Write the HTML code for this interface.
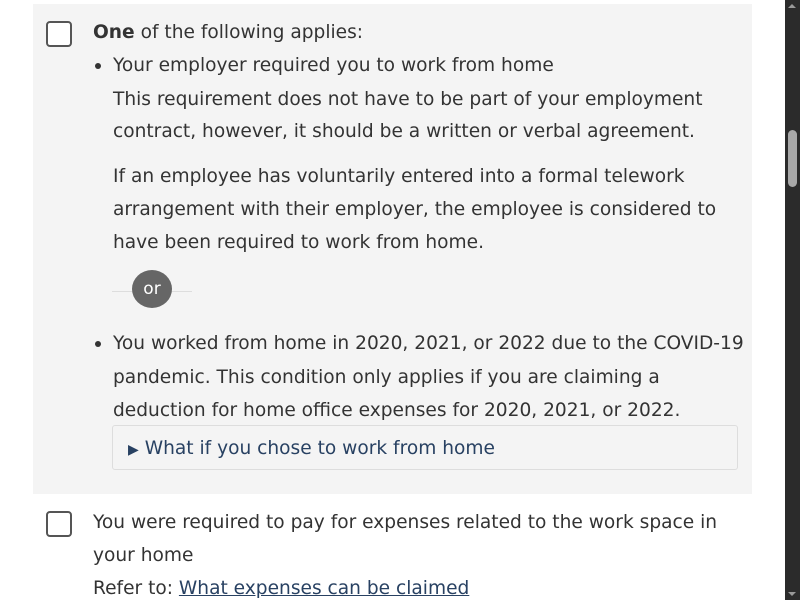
<!DOCTYPE html>
<html><head><style>
html,body{margin:0;padding:0;width:800px;height:600px;overflow:hidden;background:#fff;}
body{font-family:"DejaVu Sans","Liberation Sans",sans-serif;font-size:18.6px;color:#333;position:relative;}
.panel{position:absolute;left:33px;top:4px;width:719px;height:490px;background:#f4f4f4;}
.t{position:absolute;white-space:nowrap;line-height:33px;}
.cb{position:absolute;width:22px;height:22px;border:2px solid #555;border-radius:4px;background:#fff;}
.dot{position:absolute;width:6px;height:6px;border-radius:50%;background:#333;}
.sb{position:absolute;left:785px;top:0;width:15px;height:600px;background:#2b2b2b;}
.th{position:absolute;left:788px;top:130px;width:9px;height:57px;background:#a8a8a8;border-radius:5px;}
a{color:#284162;}
</style></head><body>
<div class="panel"></div>
<div class="cb" style="left:46px;top:21px"></div>
<div class="t" style="left:93px;top:16px"><b>One</b> of the following applies:</div>
<div class="dot" style="left:95px;top:63px"></div>
<div class="t" style="left:113px;top:49px">Your employer required you to work from home</div>
<div class="t" style="left:113px;top:83px">This requirement does not have to be part of your employment</div>
<div class="t" style="left:113px;top:115px">contract, however, it should be a written or verbal agreement.</div>
<div class="t" style="left:113px;top:160px">If an employee has voluntarily entered into a formal telework</div>
<div class="t" style="left:113px;top:193px">arrangement with their employer, the employee is considered to</div>
<div class="t" style="left:113px;top:226px">have been required to work from home.</div>
<div style="position:absolute;left:112px;top:291px;width:80px;height:1px;background:#ddd"></div>
<div style="position:absolute;left:132px;top:270px;width:40px;height:38px;border-radius:50%;background:#666;color:#fff;text-align:center;line-height:38px;font-size:17px">or</div>
<div class="dot" style="left:95px;top:341px"></div>
<div class="t" style="left:113px;top:327px">You worked from home in 2020, 2021, or 2022 due to the COVID-19</div>
<div class="t" style="left:113px;top:361px">pandemic. This condition only applies if you are claiming a</div>
<div class="t" style="left:113px;top:394px">deduction for home office expenses for 2020, 2021, or 2022.</div>
<div style="position:absolute;left:112px;top:425px;width:624px;height:43px;border:1px solid #ddd;border-radius:3px"></div>
<div class="t" style="left:128px;top:432px;color:#284162"><span style="font-size:14px">&#9654;</span> What if you chose to work from home</div>
<div class="cb" style="left:46px;top:511px"></div>
<div class="t" style="left:93px;top:506px">You were required to pay for expenses related to the work space in</div>
<div class="t" style="left:93px;top:539px">your home</div>
<div class="t" style="left:93px;top:572px">Refer to: <a href="#">What expenses can be claimed</a></div>
<div class="sb"></div><div class="th"></div>
<div style="position:absolute;left:788px;top:4px;width:0;height:0;border-left:4px solid transparent;border-right:4px solid transparent;border-bottom:4px solid #999"></div>
<div style="position:absolute;left:788px;top:592px;width:0;height:0;border-left:4px solid transparent;border-right:4px solid transparent;border-top:4px solid #999"></div>
</body></html>
